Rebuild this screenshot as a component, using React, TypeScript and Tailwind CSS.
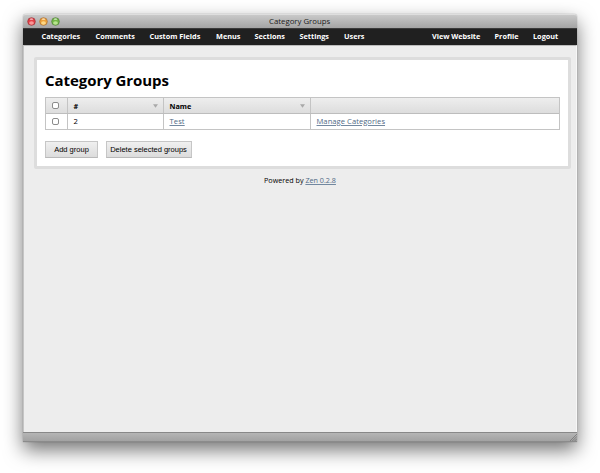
import type { ReactNode } from 'react'

function Light({ color, glow, edge }: { color: string; glow: string; edge: string }) {
  return (
    <svg width="9" height="9" viewBox="0 0 8 8">
      <circle cx="4" cy="4" r="3.4" fill={color} stroke={edge} strokeWidth=".6" />
      <ellipse cx="4" cy="5.3" rx="2.1" ry="1.6" fill={glow} opacity=".8" />
      <ellipse cx="4" cy="1.9" rx="1.4" ry=".8" fill="#fff" opacity=".55" />
    </svg>
  )
}

function Check() {
  return <span className="block h-[7px] w-[7px] rounded-[2px] border border-[#8c8c8c] bg-white" />
}

function Sort() {
  return (
    <svg className="mr-[5px]" width="5" height="4" viewBox="0 0 5 4">
      <path d="M0 .3h5L2.5 3.7z" fill="#a9a9a9" />
    </svg>
  )
}

function Button({ className, children }: { className: string; children: ReactNode }) {
  return (
    <button
      className={`flex h-[17px] items-center justify-center whitespace-nowrap border border-[#c6c6c6] border-b-[#b9b9b9] bg-linear-to-b from-[#f0f0f0] to-[#dcdcdc] font-['Liberation_Sans',sans-serif] text-[7.5px] leading-none text-black ${className}`}
    >
      {children}
    </button>
  )
}

const link = 'text-[#4f6985] underline decoration-[#7288a0] underline-offset-1'

export default function App() {
  return (
    <div className="h-[473px] w-[600px] overflow-hidden bg-white pl-[23px] pt-[14px] font-['Open_Sans','Noto_Sans',sans-serif] text-black">
      <div className="flex h-[428px] w-[554px] flex-col rounded-t-[3px] bg-[#ededed] shadow-[0_8px_19px_rgba(0,0,0,0.55),0_0_1px_rgba(0,0,0,0.5)]">
        <header className="flex h-[14px] items-center rounded-t-[3px] border-t border-[#dedede] bg-linear-to-b from-[#c9c9c9] to-[#a4a4a4] pl-[4px]">
          <div className="flex w-[242px] gap-[3px]">
            <Light color="#e34048" glow="#ffabaa" edge="#9b3034" />
            <Light color="#eda33b" glow="#ffe397" edge="#a76c30" />
            <Light color="#74b848" glow="#c9efa0" edge="#4e7d35" />
          </div>
          <div className="whitespace-nowrap text-[7.8px] leading-[11px] text-[#202020]">Category Groups</div>
        </header>
        <nav className="flex h-[17px] items-center whitespace-nowrap border-t border-[#3a3a3a] bg-[#202020] pl-[18.5px] pr-[18.5px] text-[7.3px] font-bold leading-none text-white">
          <span className="w-[54px]">Categories</span>
          <span className="w-[54px]">Comments</span>
          <span className="w-[66.5px]">Custom Fields</span>
          <span className="w-[38.5px]">Menus</span>
          <span className="w-[45px]">Sections</span>
          <span className="w-[44.5px]">Settings</span>
          <span>Users</span>
          <span className="ml-auto w-[62.5px] tracking-[-0.04px]">View Website</span>
          <span className="w-[38.5px]">Profile</span>
          <span className="w-[25.5px]">Logout</span>
        </nav>
        <main className="flex flex-1 flex-col border-x border-t border-l-[#c5c5c5] border-r-[#f7f7f7] border-t-[#bcbcbc] pl-[10px] pr-[5px] pt-[11px]">
          <section className="h-[112px] rounded-[2px] border-[3px] border-[#dddddd] bg-white pl-[8px] pr-[8px] pt-[9px]">
            <h1 className="h-[28px] whitespace-nowrap text-[15px] font-bold leading-[22px] tracking-[-0.06px]">Category Groups</h1>
            <div className="h-[33px] w-[515px] border border-[#c4c4c4] text-[7.3px] leading-none">
              <div className="flex h-[16px] border-b border-[#bdbdbd] bg-linear-to-b from-[#eeeeee] to-[#dddddd] font-bold">
                <div className="flex w-[22px] items-center border-r border-[#c4c4c4] pl-[6px]"><Check /></div>
                <div className="flex w-[96px] items-center justify-between border-r border-[#c4c4c4] pl-[5.5px]"><span className="pt-[2px]">#</span><Sort /></div>
                <div className="flex w-[147px] items-center justify-between border-r border-[#c4c4c4] pl-[5.5px]"><span className="pt-[2px]">Name</span><Sort /></div>
              </div>
              <div className="flex h-[15px]">
                <div className="flex w-[22px] items-center border-r border-[#c4c4c4] pl-[6px]"><Check /></div>
                <div className="flex w-[96px] items-center border-r border-[#c4c4c4] pl-[5.5px] text-[7.6px]">2</div>
                <div className="flex w-[147px] items-center border-r border-[#c4c4c4] pl-[5.5px] text-[7.6px] tracking-[0.1px]"><a className={link}>Test</a></div>
                <div className="flex items-center whitespace-nowrap pl-[5.5px] text-[7.6px] tracking-[0.04px]"><a className={link}>Manage Categories</a></div>
              </div>
            </div>
            <div className="mt-[11px] flex gap-[8px]">
              <Button className="w-[53px]">Add group</Button>
              <Button className="w-[86px] pr-[1px]">Delete selected groups</Button>
            </div>
          </section>
          <footer className="mt-[7px] whitespace-nowrap pr-[5px] text-center text-[7.2px] leading-[9px]">
            Powered by <a className={link}>Zen 0.2.8</a>
          </footer>
        </main>
        <div className="flex h-[10px] items-end justify-end border-y border-t-[#888888] border-b-[#8b8b8b] bg-linear-to-b from-[#b5b5b5] to-[#a2a2a2]">
          <svg width="8" height="8" viewBox="0 0 8 8" stroke="#6f6f6f" strokeWidth=".7">
            <path d="M1 8L8 1M3.3 8L8 3.3M5.6 8L8 5.6" />
          </svg>
        </div>
      </div>
    </div>
  )
}
